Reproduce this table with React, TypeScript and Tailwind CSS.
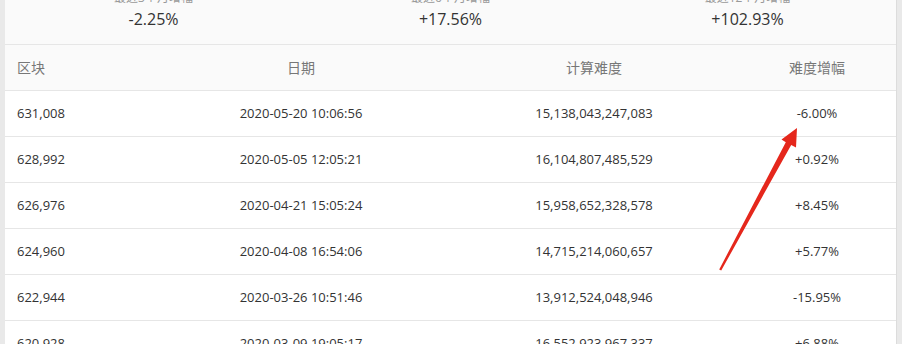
const summary = [
  { label: '最近3个月增幅', value: '-2.25%' },
  { label: '最近6个月增幅', value: '+17.56%' },
  { label: '最近12个月增幅', value: '+102.93%' },
];

const rows = [
  ['631,008', '2020-05-20 10:06:56', '15,138,043,247,083', '-6.00%'],
  ['628,992', '2020-05-05 12:05:21', '16,104,807,485,529', '+0.92%'],
  ['626,976', '2020-04-21 15:05:24', '15,958,652,328,578', '+8.45%'],
  ['624,960', '2020-04-08 16:54:06', '14,715,214,060,657', '+5.77%'],
  ['622,944', '2020-03-26 10:51:46', '13,912,524,048,946', '-15.95%'],
  ['620,928', '2020-03-09 19:05:17', '16,552,923,967,337', '+6.88%'],
];

const cols = 'grid grid-cols-[147px_298px_288px_158px] items-center';

const App = () => {
  return (
    <div
      className="relative flex h-[344px] w-[902px] overflow-hidden bg-[#e9e9e9]"
      style={{ fontFamily: '"Open Sans", "Noto Sans CJK SC", sans-serif' }}
    >
      <div className="ml-[5px] flex w-[891px] flex-col bg-white">
        <div className="grid h-[45px] shrink-0 grid-cols-3 border-b border-[#e6e6e6] bg-[#fafafa]">
          {summary.map((s) => (
            <div key={s.label} className="flex flex-col items-center">
              <span className="-mt-[10px] text-[12px] leading-4 text-[#999]">{s.label}</span>
              <span className="mt-[2px] text-[16px] leading-[22px] text-[#333]">{s.value}</span>
            </div>
          ))}
        </div>
        <div className={`${cols} h-[46px] shrink-0 border-b border-[#e6e6e6] bg-[#fafafa] text-[14px] text-[#777]`}>
          <span className="pl-[12px]">区块</span>
          <span className="text-center">日期</span>
          <span className="text-center">计算难度</span>
          <span className="text-center">难度增幅</span>
        </div>
        {rows.map((r) => (
          <div
            key={r[0]}
            className={`${cols} h-[46px] shrink-0 border-b border-[#e6e6e6] text-[13px] text-[#333]`}
          >
            <span className="pl-[12px]">{r[0]}</span>
            <span className="text-center">{r[1]}</span>
            <span className="text-center">{r[2]}</span>
            <span className="text-center">{r[3]}</span>
          </div>
        ))}
      </div>
      <div className="w-[1px] bg-[#dcdcdc]" />
      <svg
        className="pointer-events-none absolute top-0 left-0"
        width="902"
        height="344"
        viewBox="0 0 902 344"
      >
        <polygon
          points="797,128 796,147.5 791.2,145 721.2,270.5 719.2,269.5 785.8,142.2 781.5,139.5"
          fill="#e5271c"
        />
      </svg>
    </div>
  );
};

export default App;
